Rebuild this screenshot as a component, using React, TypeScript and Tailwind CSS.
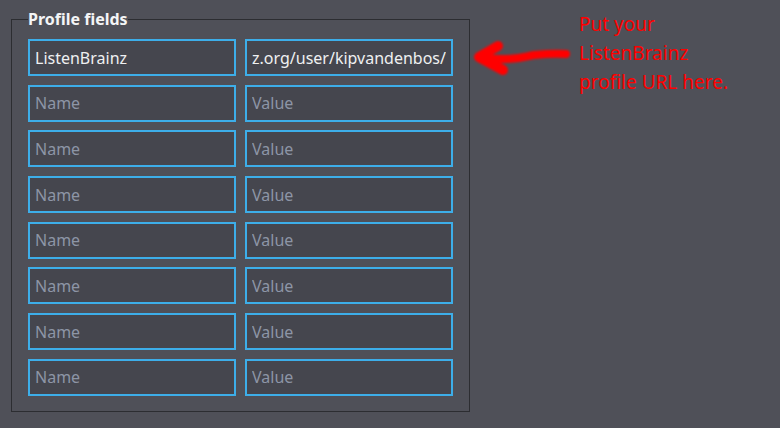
import React from "react";

const rows = Array.from({ length: 7 });

function Field({ placeholder }: { placeholder: string }) {
  return (
    <input
      readOnly
      placeholder={placeholder}
      className="h-[37px] w-full border-2 border-[#3daee9] bg-[#45464e] px-[5px] text-[16px] text-[#eff0f1] outline-none placeholder:text-[#8d95a6]"
    />
  );
}

export default function App() {
  return (
    <div className="flex h-[428px] w-[780px] items-start bg-[#4f5058] font-['Noto_Sans',sans-serif]">
      <fieldset className="ml-[11px] mt-[9px] h-[403px] w-[459px] border border-[#2c2d31] px-[16px] pt-[10px]">
        <legend className="p-0 text-[16px] font-bold leading-[20px] text-[#f4f5f6]">Profile fields</legend>
        <div className="grid grid-cols-2 gap-x-[9px] gap-y-[8.7px]">
          <input
            readOnly
            defaultValue="ListenBrainz"
            className="h-[37px] w-full border-2 border-[#3daee9] bg-[#45464e] px-[5px] text-[16px] text-[#eff0f1] outline-none"
          />
          <div className="flex h-[37px] items-center border-2 border-[#3daee9] bg-[#45464e] px-[5px]">
            <div className="flex w-full justify-end overflow-hidden whitespace-nowrap text-[16px] text-[#eff0f1]">
              <span>https://listenbrainz.org/user/kipvandenbos/</span>
            </div>
          </div>
          {rows.map((_, i) => (
            <React.Fragment key={i}>
              <Field placeholder="Name" />
              <Field placeholder="Value" />
            </React.Fragment>
          ))}
        </div>
      </fieldset>
      <svg width="100" height="40" viewBox="0 0 100 40" className="ml-[2px] mt-[38px]">
        <defs>
          <filter id="soft" x="-20%" y="-40%" width="140%" height="180%">
            <feGaussianBlur stdDeviation="0.9" />
          </filter>
        </defs>
        <g filter="url(#soft)" fill="none" stroke="#ff0000" strokeLinecap="round" strokeLinejoin="round">
          <path d="M94 16 C82 15 72 16 62 17 C50 19 42 23 10 20" strokeWidth="8" />
          <path d="M26 8 L7 19 L31 32" strokeWidth="10" />
        </g>
      </svg>
      <div className="ml-[7px] mt-[10px] text-[19px] leading-[29px] text-[#ff0000]">
        <div>Put your</div>
        <div>ListenBrainz</div>
        <div>profile URL here.</div>
      </div>
    </div>
  );
}
